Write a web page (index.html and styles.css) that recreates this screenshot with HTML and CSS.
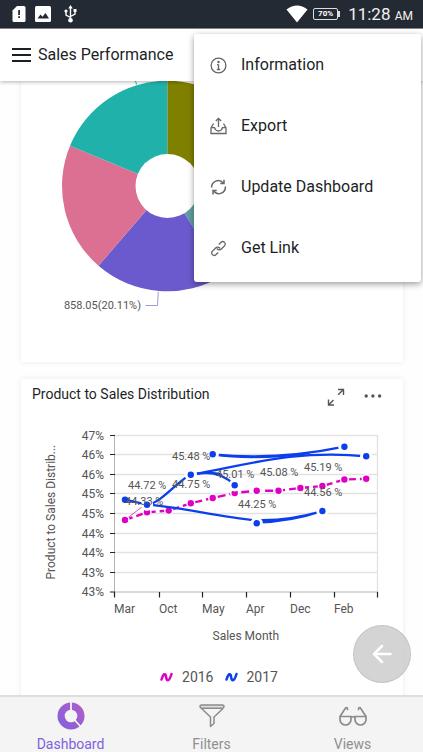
FILE: index.html
```html
<!DOCTYPE html>
<html lang="en">
<head>
<meta charset="utf-8">
<meta name="viewport" content="width=device-width, initial-scale=1">
<title>Sales Performance</title>
<link rel="stylesheet" href="styles.css">
</head>
<body>
<div class="status">
  <div class="status-group">
    <svg class="sd" width="14" height="18" viewBox="0 0 14 18"><path d="M5 1h7a1.500 1.500 0 0 1 1.500 1.500v13a1.500 1.500 0 0 1-1.500 1.500H2A1.500 1.500 0 0 1 .5 15.500V5.500z" fill="#fff"/><path d="M6.200 5h1.800v5H6.200zM6.200 11.300h1.800v1.800H6.200z" fill="#242a33"/></svg>
    <svg class="pic" width="16" height="16" viewBox="0 0 16 16"><rect width="16" height="16" rx="1.500" fill="#fff"/><path d="M2.500 12.500l3-4 2 2.300L10.500 7l3.500 5.500z" fill="#242a33"/></svg>
    <svg width="13" height="18" viewBox="0 0 13 18" fill="none" stroke="#fff" stroke-width="1.400"><path d="M6.500 3v12M6.500 12.500L2 10V6.500M6.500 11.500L11 9V5.500"/><path d="M6.500 0l2.300 3.500H4.200z" fill="#fff" stroke="none"/><circle cx="6.500" cy="15.300" r="2.300" fill="#fff" stroke="none"/><circle cx="2" cy="6" r="1.600" fill="#fff" stroke="none"/><path d="M9.500 4h3v3h-3z" fill="#fff" stroke="none"/></svg>
  </div>
  <div class="status-group">
    <svg width="22" height="18" viewBox="0 0 22 18"><path d="M.5 4.500Q11-3.500 21.500 4.500L11 17.500z" fill="#fff"/></svg>
    <span class="battery">70%</span>
    <span class="time">11:28 <small>AM</small></span>
  </div>
</div>
<header class="appbar">
  <button class="burger" aria-label="Menu"><span></span><span></span><span></span></button>
  <h1>Sales Performance</h1>
  <div class="menu">
    <button><svg width="18" height="18" viewBox="0 0 18 18"><circle cx="8.500" cy="9.500" r="7.400"/><path d="M8.500 8.500v5M7 8.600h1.500M6.800 13.500h3.400"/><circle cx="8.500" cy="6" r=".6"/></svg>Information</button>
    <button><svg width="18" height="18" viewBox="0 0 18 18"><path d="M8.500 10V1.500M5.800 4L8.500 1.300 11.200 4M3.500 6.500L1 11v5.500h15V11l-2.500-4.500M1 10.700h3.500c.6 2.200 2 3.300 4 3.300s3.400-1.100 4-3.300H16"/></svg>Export</button>
    <button><svg width="18" height="18" viewBox="0 0 18 18"><path d="M1.600 9.500A6.600 6.600 0 0 1 13.200 5M15.400 8.500A6.600 6.600 0 0 1 3.800 13.300" stroke-width="1.500"/><path d="M14 1.800v3.700h-3.700M3 16.400v-3.800h3.700" stroke-width="1.500"/></svg>Update Dashboard</button>
    <button><svg width="18" height="18" viewBox="0 0 18 18"><g transform="rotate(-45 8.500 9.500)"><path d="M7.300 8.300V9A2.800 2.800 0 0 0 10.100 11.900H15.200A2.600 2.600 0 0 0 15.200 6.900H11.500"/><path d="M9.700 10.700V10A2.800 2.800 0 0 0 6.900 7.100H1.800A2.600 2.600 0 0 0 1.800 12.100H5.500"/></g></svg>Get Link</button>
  </div>
</header>
<main>
  <section class="card pie">
    <svg viewBox="21 81 382 281" height="281" preserveAspectRatio="xMinYMin meet" role="img" aria-label="Sales share">
      <path d="M167.300 186V80.700A105.300 105.300 0 0 1 272.600 186z" fill="#808000"/>
      <path d="M167.300 186H272.600A105.300 105.300 0 0 1 223.200 275.200z" fill="#5f9ea0"/>
      <path d="M167.300 186L223.200 275.200A105.300 105.300 0 0 1 98.500 265.700z" fill="#6a5acd"/>
      <path d="M167.300 186L98.500 265.700A105.300 105.300 0 0 1 70 145.700z" fill="#db7093"/>
      <path d="M167.300 186L70 145.700A105.300 105.300 0 0 1 167.300 80.700z" fill="#20b2aa"/>
      <circle cx="167.500" cy="186" r="32" fill="#fff"/>
      <path d="M136.500 84.500L135 79" stroke="#20b2aa" fill="none"/>
      <path d="M158.300 291.500l-.8 14h-12" stroke="#a29bcf" fill="none"/>
      <text x="141" y="309" text-anchor="end" class="t11">858.05(20.11%)</text>
    </svg>
  </section>
  <section class="card dist">
    <div class="card-head">
      <h2>Product to Sales Distribution</h2>
      <button aria-label="Expand"><svg width="18" height="18" viewBox="0 0 18 18" fill="none" stroke="#555" stroke-width="1.400"><path d="M11 1.500h5.500V7M16.200 1.800l-5 5M1.500 11.500V17H7M1.800 16.700l4.700-4.700"/></svg></button>
      <button aria-label="More"><svg width="18" height="18" viewBox="0 0 18 18" fill="#555"><circle cx="2.200" cy="8" r="1.700"/><circle cx="8.900" cy="8" r="1.700"/><circle cx="15.600" cy="8" r="1.700"/></svg></button>
    </div>
    <svg class="plot" viewBox="21 414 382 234" height="234" preserveAspectRatio="xMinYMin meet" role="img" aria-label="Product to sales distribution by month">
      <path d="M114 435.500h264M114 454.500h264M114 474.500h264M114 493.500h264M114 513.500h264M114 533.500h264M114 552.500h264M114 572.500h264M377.500 435v157" stroke="#e2e2e2" stroke-width="1.300" fill="none"/>
      <path d="M114.500 435v157M114 592h264" stroke="#b4b4b4" fill="none"/>
      <path d="M110 435.500h5M110 454.500h5M110 474.500h5M110 493.500h5M110 513.500h5M110 533.500h5M110 552.500h5M110 572.500h5M110 592h5M114.500 592v5.500M159.500 592v5.500M202.500 592v5.500M246.500 592v5.500M290.500 592v5.500M334.500 592v5.500M377.500 592v5.500" stroke="#222" stroke-width="1.200" fill="none"/>
      <g class="t12" text-anchor="end">
        <text x="104" y="439.500">47%</text><text x="104" y="458.500">46%</text><text x="104" y="478.500">46%</text><text x="104" y="497.500">45%</text><text x="104" y="517.500">45%</text><text x="104" y="537.500">44%</text><text x="104" y="556.500">44%</text><text x="104" y="576.500">43%</text><text x="104" y="596">43%</text>
      </g>
      <g class="t12">
        <text x="114" y="612.500">Mar</text><text x="159" y="612.500">Oct</text><text x="202" y="612.500">May</text><text x="246" y="612.500">Apr</text><text x="290" y="612.500">Dec</text><text x="334" y="612.500">Feb</text>
        <text x="212.500" y="640">Sales Month</text>
        <text transform="translate(55 579.500) rotate(-90)">Product to Sales Distrib...</text>
      </g>
      <path d="M125 520L147 503" stroke="#d94fc0" fill="none"/>
      <path d="M125 520L147 512.300 168.700 510.600 190.800 503.300 212.700 498 234.700 493 256.700 490.700 278.500 490.700 300.400 488 322.400 486 344.400 479.500 366.200 478.700" stroke="#e000c4" stroke-width="2.400" stroke-dasharray="8 4" fill="none"/>
      <g fill="#e000c4" stroke="#fff" stroke-width="3" paint-order="stroke">
        <circle cx="125" cy="520" r="3.200"/><circle cx="147" cy="512.300" r="3.200"/><circle cx="168.700" cy="510.600" r="3.200"/><circle cx="190.800" cy="503.300" r="3.200"/><circle cx="212.700" cy="498" r="3.200"/><circle cx="234.700" cy="493" r="3.200"/><circle cx="256.700" cy="490.700" r="3.200"/><circle cx="278.500" cy="490.700" r="3.200"/><circle cx="300.400" cy="488" r="3.200"/><circle cx="322.400" cy="486" r="3.200"/><circle cx="344.400" cy="479.500" r="3.200"/><circle cx="366.200" cy="478.700" r="3.200"/>
      </g>
      <g fill="none" stroke="#0b3fee" stroke-width="2.300">
        <path d="M125 499.700L147 504.700C180 507 215 516 256.700 520.500M256.700 522.500Q290 522 322.400 511M256.700 520Q288 521 322.400 511"/>
        <path d="M147 504.700C162 503 178 480 190.800 474.800Q218 468 234.700 485.300M190.800 474.800Q212 471 222 475"/>
        <path d="M190.800 474.800C240 467 290 449 366.200 456.300"/>
        <path d="M212.700 454.300C260 459 300 456 344.400 446.700M212.700 454.300C245 459 275 457.500 310 453"/>
      </g>
      <g fill="#0b3fee" stroke="#fff" stroke-width="6" paint-order="stroke">
        <circle cx="147" cy="504.700" r="3.200"/><circle cx="190.800" cy="474.800" r="3.200"/><circle cx="212.700" cy="454.200" r="3.200"/><circle cx="234.700" cy="485.300" r="3.200"/><circle cx="256.700" cy="523.300" r="3.200"/><circle cx="322.400" cy="511" r="3.200"/><circle cx="344.400" cy="446.700" r="3.200"/><circle cx="366.200" cy="456.300" r="3.200"/>
      </g>
      <circle cx="125" cy="499.700" r="3.200" fill="#0b3fee"/>
      <g class="t11">
        <text x="128" y="489">44.72 %</text><text x="125" y="504.500">44.33 %</text><text x="172" y="459.500">45.48 %</text><text x="172" y="488">44.75 %</text><text x="216" y="478">45.01 %</text><text x="260" y="475.500">45.08 %</text><text x="304" y="471">45.19 %</text><text x="304" y="496">44.56 %</text><text x="238" y="508">44.25 %</text>
      </g>
    </svg>
    <div class="legend">
      <span class="key y16"><svg width="13" height="11" viewBox="0 0 13 11"><path d="M1.500 7.500C3.500 1 5.500 1 6 4.500S8.500 12 11.500 2"/></svg>2016</span>
      <span class="key y17"><svg width="13" height="11" viewBox="0 0 13 11"><path d="M1.500 7.500C3.500 1 5.500 1 6 4.500S8.500 12 11.500 2"/></svg>2017</span>
    </div>
  </section>
</main>
<button class="fab" aria-label="Back"><svg width="20" height="20" viewBox="0 0 20 20"><path d="M18.500 10H2M10 2L2 10l8 8"/></svg></button>
<nav>
  <a href="#" class="active"><svg width="28" height="28" viewBox="0 0 28 28"><defs><linearGradient id="g" x1="0" y1="1" x2="1" y2="0"><stop offset="0" stop-color="#7f62dc"/><stop offset="1" stop-color="#b45cc8"/></linearGradient></defs><circle cx="14" cy="14" r="13.500" fill="url(#g)"/><circle cx="14" cy="14" r="6.300" fill="#f4f4f4"/><path d="M14 14V0M14 14l10 11" stroke="#f4f4f4" stroke-width="1.800"/></svg>Dashboard</a>
  <a href="#"><svg width="28" height="28" viewBox="0 0 28 28" fill="none" stroke="#8b8b8b" stroke-width="1.500" stroke-linejoin="round"><rect x="2" y="3" width="24" height="3.200" rx="1.600" fill="#ddd"/><path d="M3.500 6.500l9 8.500v9.500l3.500-3V15l9-8.500"/></svg>Filters</a>
  <a href="#"><svg width="30" height="28" viewBox="0 0 30 28" fill="none" stroke="#8b8b8b" stroke-width="1.700" stroke-linecap="round"><path d="M2 14.500h11v3a5.500 5.500 0 0 1-11 0zM17 14.500h11v3a5.500 5.500 0 0 1-11 0zM13 15.500q2-1.500 4 0M2 14.500L7.500 6q2-1.500 2 1.500M28 14.500L22.500 6q-2-1.500-2 1.500"/></svg>Views</a>
</nav>
</body>
</html>
```
FILE: styles.css
```css
* { box-sizing: border-box; }
body {
  margin: 0;
  height: 100vh;
  display: flex;
  flex-direction: column;
  overflow: hidden;
  background: #fefefe;
  color: #1c1f26;
  font-family: Roboto, "Liberation Sans", sans-serif;
}
button {
  border: 0;
  padding: 0;
  background: none;
  font: inherit;
  color: inherit;
}
svg { display: block; flex: none; }
h1, h2 { margin: 0; font-weight: 400; }

.status {
  flex: none;
  height: 29px;
  padding: 0 10px 0 12px;
  display: flex;
  justify-content: space-between;
  background: #242a33;
  border-bottom: 1px solid #8c8f93;
  color: #fff;
}
.status-group { display: flex; align-items: center; }
.sd, .pic { margin-right: 9px; }
.pic { margin-right: 13px; }
.battery {
  width: 25px;
  height: 12px;
  margin: 0 10px 0 5px;
  position: relative;
  border: 1px solid #ddd;
  border-radius: 2px;
  font-size: 8px;
  font-weight: 700;
  line-height: 10px;
  text-align: center;
}
.battery::after {
  content: "";
  position: absolute;
  right: -3px;
  top: 2px;
  width: 2px;
  height: 6px;
  background: #ddd;
}
.time { font-size: 17px; line-height: 28px; padding-top: 2px; color: #f2f2f2; }
.time small { font-size: 12px; }

.appbar {
  flex: none;
  height: 52px;
  padding: 0 12px;
  display: flex;
  align-items: center;
  gap: 7px;
  position: relative;
  z-index: 2;
  background: #fff;
  box-shadow: 0 1px 4px rgba(0, 0, 0, .3);
}
.appbar h1 { font-size: 16px; line-height: 20px; }
.burger { width: 19px; display: grid; gap: 4px; }
.burger span { height: 2px; background: #1c1f26; }
.menu {
  position: absolute;
  top: 5px;
  right: 2px;
  width: 227px;
  padding: 0 0 4px;
  background: #fff;
  border-radius: 3px;
  box-shadow: 0 2px 6px rgba(0, 0, 0, .4);
}
.menu button {
  width: 100%;
  height: 61px;
  padding-left: 16px;
  display: flex;
  align-items: center;
  gap: 13px;
  font-size: 16px;
  text-align: left;
}
.menu svg { fill: none; stroke: #666; stroke-width: 1.3; }

main { flex: 1; min-height: 0; overflow: hidden; }
.card {
  margin: 0 20px 17px 21px;
  background: #fff;
  box-shadow: 0 0 6px rgba(0, 0, 0, .08);
}
.card-head {
  height: 35px;
  padding: 0 21px 0 11px;
  display: flex;
  align-items: center;
  gap: 19px;
}
.card-head h2 { flex: 1; font-size: 14px; line-height: 20px; padding-bottom: 6px; }
.t11, .t12 { fill: #555; font-size: 11px; }
.t12 { font-size: 12px; }
.legend {
  display: flex;
  justify-content: center;
  gap: 11px;
  padding: 20px 0 24px 14px;
  font-size: 14px;
  line-height: 18px;
  color: #555;
}
.key { display: flex; align-items: center; gap: 9px; }
.key path { fill: none; stroke-width: 2.5; stroke-linecap: round; }
.y16 path { stroke: #e000c4; }
.y17 path { stroke: #0b3fee; }

.fab {
  position: fixed;
  right: 12px;
  bottom: 69px;
  z-index: 3;
  width: 58px;
  height: 58px;
  display: grid;
  place-items: center;
  border: 1px solid rgba(0, 0, 0, .08);
  border-radius: 50%;
  background: rgba(195, 195, 195, .72);
}
.fab path { fill: none; stroke: #fff; stroke-width: 2.5; stroke-linecap: round; }

nav {
  flex: none;
  height: 57px;
  display: grid;
  grid-template-columns: repeat(3, 1fr);
  background: #f4f4f4;
  border-top: 2px solid #dedede;
  z-index: 2;
}
nav a {
  padding-top: 5px;
  display: flex;
  flex-direction: column;
  align-items: center;
  gap: 5px;
  font-size: 14px;
  line-height: 18px;
  color: #8f8f8f;
  text-decoration: none;
}
nav .active { color: #8161dc; }
```
